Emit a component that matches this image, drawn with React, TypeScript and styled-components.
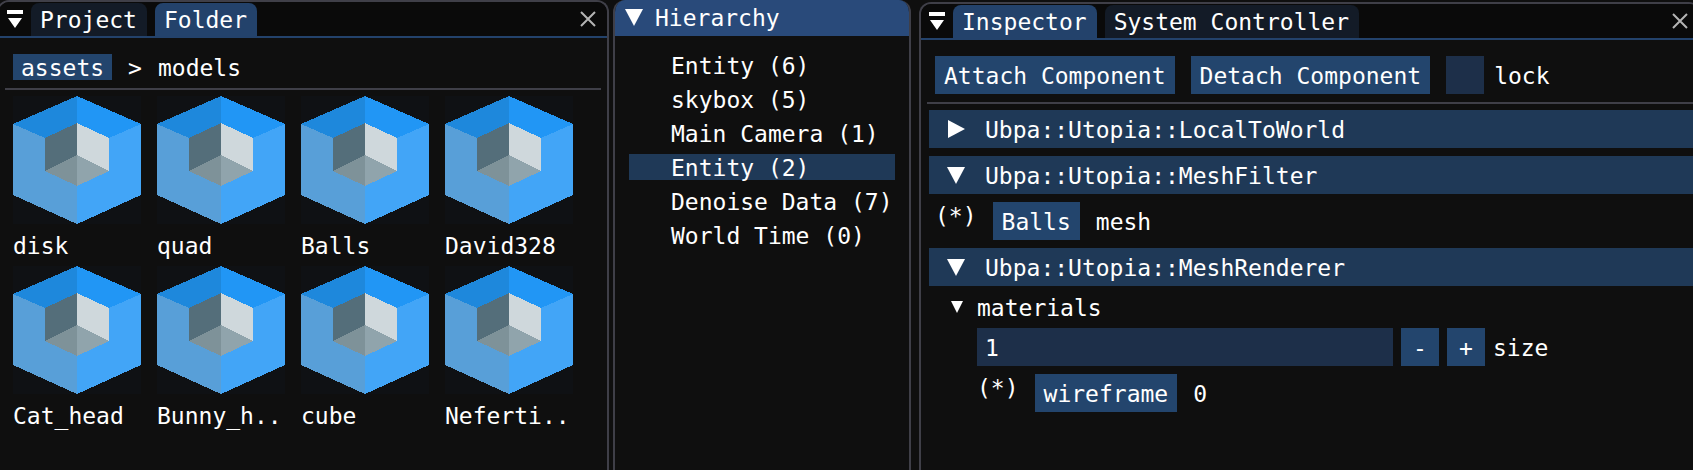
import { useState } from "react";
import styled, { createGlobalStyle } from "styled-components";

const color = {
  body: "#0f0f0f",
  bar: "#0a0a0a",
  border: "#3f3f48",
  button: "#23456d",
  tab: "#23426b",
  tabIdle: "#131b27",
  title: "#294a7a",
  header: "#1f3957",
  frame: "#1d2f49",
  text: "#ffffff",
};

const GlobalStyle = createGlobalStyle`
  * { box-sizing: border-box; }
  body { margin: 0; background: ${color.body}; overflow: hidden; }
  body, button, input {
    font-family: "DejaVu Sans Mono", "Liberation Mono", monospace;
    font-size: 23px;
    line-height: 24px;
    color: ${color.text};
  }
  button { border: 0; border-radius: 0; margin: 0; cursor: pointer; white-space: pre; }
  svg { display: block; flex: none; }
`;

/* The docked windows run slightly past both sides of the viewport. */
const Dock = styled.main`
  display: flex;
  min-height: 100vh;
  margin: 0 -8px 0 -3px;
  overflow: hidden;
`;

const Panel = styled.section<{ $grow: number }>`
  flex: ${(p) => p.$grow} 1 0;
  min-width: 0;
  display: flex;
  flex-direction: column;
  overflow: hidden;
  background: ${color.body};
  border: 2px solid ${color.border};
  border-bottom: 0;
  border-radius: 12px 12px 0 0;
`;

const HierarchyPanel = styled(Panel)`
  border-top: 0;
  margin: 0 8px 0 4px;
`;

const InspectorPanel = styled(Panel)`
  margin-top: 2px;
`;

const TabBar = styled.div`
  display: flex;
  align-items: flex-end;
  height: 36px;
  padding: 0 11px 0 8px;
  background: ${color.bar};
  border-bottom: 2px solid ${color.tab};
`;

const Tabs = styled.div`
  display: flex;
  gap: 8px;
  margin: 0 auto 0 8px;
`;

const Tab = styled.button<{ $active: boolean }>`
  height: 33px;
  padding: 5px 10px 4px 9px;
  border-radius: 8px 8px 0 0;
  background: ${(p) => (p.$active ? color.tab : color.tabIdle)};
`;

const IconButton = styled.button`
  align-self: center;
  padding: 0;
  background: none;
`;

const Label = styled.span`
  padding-top: 2px;
`;

const TitleBar = styled.button`
  display: flex;
  align-items: center;
  gap: 12px;
  height: 36px;
  padding: 0 10px 2px;
  background: ${color.title};
  text-align: left;
`;

const PanelBody = styled.div`
  display: flex;
  flex-direction: column;
  gap: 8px;
  padding: 16px 14px;
`;

const Separator = styled.hr`
  width: auto;
  height: 2px;
  margin: 0 -8px -2px;
  border: 0;
  background: ${color.border};
`;

const Row = styled.div<{ $indent?: boolean }>`
  display: flex;
  align-items: flex-start;
  gap: 16px;
  padding-left: ${(p) => (p.$indent ? 42 : 0)}px;
`;

const CrumbButton = styled.button`
  height: 26px;
  padding: 2px 8px 0;
  background: ${color.button};
`;

const Button = styled.button`
  height: 38px;
  padding: 8px 9px 6px;
  background: ${color.button};
`;

const StepButton = styled(Button)`
  width: 38px;
  padding: 8px 0 6px;
`;

const FrameText = styled.span`
  padding: 8px 0 6px;
`;

const AssetGrid = styled.ul`
  display: flex;
  flex-wrap: wrap;
  gap: 8px 16px;
  margin: 0;
  padding: 0;
  list-style: none;
`;

const Asset = styled.li`
  display: flex;
  flex-direction: column;
  gap: 8px;
  width: 128px;
  white-space: nowrap;
`;

const EntityList = styled.ul`
  display: flex;
  flex-direction: column;
  gap: 8px;
  margin: 0;
  padding: 0;
  list-style: none;
`;

const EntityButton = styled.button<{ $selected: boolean }>`
  display: block;
  width: 100%;
  height: 26px;
  padding: 2px 0 0 42px;
  background: ${(p) => (p.$selected ? color.header : "transparent")};
  text-align: left;
`;

const ComponentHeader = styled.button`
  display: flex;
  align-items: center;
  gap: 20px;
  height: 38px;
  margin: 0 -8px 0 -6px;
  padding: 0 18px;
  background: ${color.header};
`;

const TreeNode = styled.button`
  display: flex;
  align-items: center;
  gap: 14px;
  height: 26px;
  padding: 0 0 0 16px;
  background: none;
`;

const CheckLabel = styled.label`
  display: flex;
  align-items: center;
  gap: 10px;
`;

const Checkbox = styled.input`
  appearance: none;
  width: 38px;
  height: 38px;
  margin: 0;
  background: ${color.frame};
  &:checked { box-shadow: inset 0 0 0 8px ${color.frame}; background: #4296fa; }
`;

const SizeRow = styled.div`
  display: flex;
  gap: 8px;
  padding-left: 42px;
`;

const NumberInput = styled.input`
  flex: 1;
  min-width: 0;
  height: 38px;
  padding: 8px 8px 6px;
  border: 0;
  border-radius: 0;
  background: ${color.frame};
`;

const SizeLabel = styled.label`
  width: 192px;
  padding: 8px 0 6px;
`;

const Triangle = ({ open = true }: { open?: boolean }) => (
  <svg width="18" height="18" viewBox="0 0 18 18" fill="#fff" aria-hidden="true">
    <path d={open ? "M0 1H18L9 18Z" : "M1 0V18L18 9Z"} />
  </svg>
);

const SmallTriangle = () => (
  <svg width="12" height="12" viewBox="0 0 12 12" fill="#fff" aria-hidden="true">
    <path d="M0 0H12L6 12Z" />
  </svg>
);

const MenuIcon = () => (
  <svg width="16" height="18" viewBox="0 0 16 18" fill="#fff" aria-hidden="true">
    <path d="M0 0H16V4H0ZM1 8H15L8 18Z" />
  </svg>
);

const CloseIcon = () => (
  <svg width="16" height="16" viewBox="0 0 16 16" fill="none" stroke="#b4b4b4" strokeWidth="2" aria-hidden="true">
    <path d="M1 1L15 15M15 1L1 15" />
  </svg>
);

const ModelIcon = () => (
  <svg width="128" height="128" viewBox="0 0 128 128" shapeRendering="crispEdges" aria-hidden="true">
    <path fill="#0f1114" d="M0 0H128V128H0Z" />
    <path fill="#1e88dc" d="M0 28L64 0V27L32 42Z" />
    <path fill="#2196f5" d="M64 0L128 28L96 42L64 27Z" />
    <path fill="#589fd8" d="M0 28L32 42V75L64 90V128L0 99Z" />
    <path fill="#42a5f7" d="M128 28L96 42V75L64 90V128L128 99Z" />
    <path fill="#546e7a" d="M64 27L32 42V75L64 59Z" />
    <path fill="#cfd8dc" d="M64 27L96 42V75L64 59Z" />
    <path fill="#7e9299" d="M64 59V90L32 75Z" />
    <path fill="#90a4ac" d="M64 59V90L96 75Z" />
  </svg>
);

function TabStrip({ tabs, initial }: { tabs: string[]; initial: string }) {
  const [active, setActive] = useState(initial);
  return (
    <TabBar>
      <IconButton aria-label="Window menu"><MenuIcon /></IconButton>
      <Tabs role="tablist">
        {tabs.map((t) => (
          <Tab key={t} role="tab" aria-selected={t === active} $active={t === active} onClick={() => setActive(t)}>
            {t}
          </Tab>
        ))}
      </Tabs>
      <IconButton aria-label="Close"><CloseIcon /></IconButton>
    </TabBar>
  );
}

function ComponentBar({ name, open = true }: { name: string; open?: boolean }) {
  return (
    <ComponentHeader aria-expanded={open}>
      <Triangle open={open} />
      <Label>{name}</Label>
    </ComponentHeader>
  );
}

const assets = ["disk", "quad", "Balls", "David328", "Cat_head", "Bunny_h..", "cube", "Neferti.."];
const entities = ["Entity (6)", "skybox (5)", "Main Camera (1)", "Entity (2)", "Denoise Data (7)", "World Time (0)"];

export default function App() {
  const [selected, setSelected] = useState("Entity (2)");
  const [size, setSize] = useState("1");
  const step = (n: number) => setSize(String(Math.max(0, (Number(size) || 0) + n)));

  return (
    <>
      <GlobalStyle />
      <Dock>
        <Panel $grow={608}>
          <TabStrip tabs={["Project", "Folder"]} initial="Folder" />
          <PanelBody>
            <Row as="nav">
              <CrumbButton>assets</CrumbButton>
              <Label>&gt;</Label>
              <Label>models</Label>
            </Row>
            <Separator />
            <AssetGrid>
              {assets.map((name) => (
                <Asset key={name}>
                  <ModelIcon />
                  <Label>{name}</Label>
                </Asset>
              ))}
            </AssetGrid>
          </PanelBody>
        </Panel>

        <HierarchyPanel $grow={294}>
          <TitleBar aria-expanded="true"><Triangle /><Label>Hierarchy</Label></TitleBar>
          <PanelBody>
            <EntityList>
              {entities.map((name) => (
                <li key={name}>
                  <EntityButton $selected={name === selected} onClick={() => setSelected(name)}>{name}</EntityButton>
                </li>
              ))}
            </EntityList>
          </PanelBody>
        </HierarchyPanel>

        <InspectorPanel $grow={778}>
          <TabStrip tabs={["Inspector", "System Controller"]} initial="Inspector" />
          <PanelBody>
            <Row>
              <Button>Attach Component</Button>
              <Button>Detach Component</Button>
              <CheckLabel><Checkbox type="checkbox" /><Label>lock</Label></CheckLabel>
            </Row>
            <Separator />
            <ComponentBar name="Ubpa::Utopia::LocalToWorld" open={false} />
            <ComponentBar name="Ubpa::Utopia::MeshFilter" />
            <Row>
              <Label>(*)</Label>
              <Button>Balls</Button>
              <FrameText>mesh</FrameText>
            </Row>
            <ComponentBar name="Ubpa::Utopia::MeshRenderer" />
            <TreeNode aria-expanded="true"><SmallTriangle /><Label>materials</Label></TreeNode>
            <SizeRow>
              <NumberInput id="size" type="text" inputMode="numeric" value={size} onChange={(e) => setSize(e.target.value)} />
              <StepButton aria-label="Decrease size" onClick={() => step(-1)}>-</StepButton>
              <StepButton aria-label="Increase size" onClick={() => step(1)}>+</StepButton>
              <SizeLabel htmlFor="size">size</SizeLabel>
            </SizeRow>
            <Row $indent>
              <Label>(*)</Label>
              <Button>wireframe</Button>
              <FrameText>0</FrameText>
            </Row>
          </PanelBody>
        </InspectorPanel>
      </Dock>
    </>
  );
}
